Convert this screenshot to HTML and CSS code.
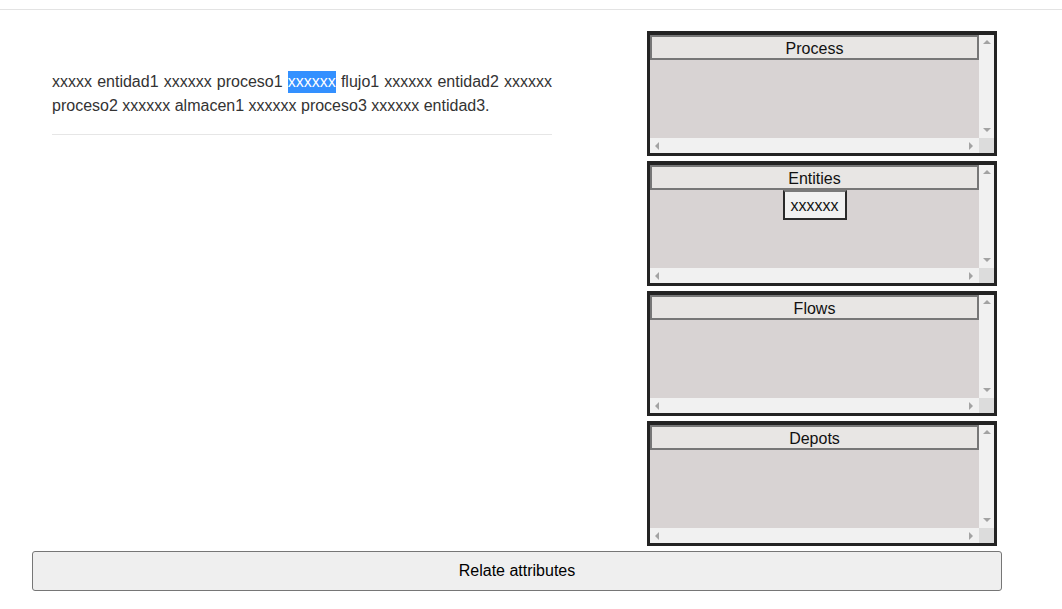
FILE: index.html
```html
<!DOCTYPE html>
<html lang="es">
<head>
<meta charset="utf-8">
<title>Relate attributes</title>
<link rel="stylesheet" href="styles.css">
</head>
<body>
<div class="topbar"></div>
<div class="main">
  <div class="left">
    <p class="sentence">xxxxx entidad1 xxxxxx proceso1 <span class="sel">xxxxxx</span> flujo1 xxxxxx entidad2 xxxxxx proceso2 xxxxxx almacen1 xxxxxx proceso3 xxxxxx entidad3.</p>
    <hr class="rule">
  </div>
  <div class="right">
    <div class="panel">
      <div class="content"><div class="head">Process</div></div>
      <div class="vbar"><span class="arr up"></span><span class="arr down"></span></div>
      <div class="hbar"><span class="arr lt"></span><span class="arr rt"></span></div>
      <div class="corner"></div>
    </div>
    <div class="panel">
      <div class="content"><div class="head">Entities</div><div class="item">xxxxxx</div></div>
      <div class="vbar"><span class="arr up"></span><span class="arr down"></span></div>
      <div class="hbar"><span class="arr lt"></span><span class="arr rt"></span></div>
      <div class="corner"></div>
    </div>
    <div class="panel">
      <div class="content"><div class="head">Flows</div></div>
      <div class="vbar"><span class="arr up"></span><span class="arr down"></span></div>
      <div class="hbar"><span class="arr lt"></span><span class="arr rt"></span></div>
      <div class="corner"></div>
    </div>
    <div class="panel">
      <div class="content"><div class="head">Depots</div></div>
      <div class="vbar"><span class="arr up"></span><span class="arr down"></span></div>
      <div class="hbar"><span class="arr lt"></span><span class="arr rt"></span></div>
      <div class="corner"></div>
    </div>
  </div>
</div>
<button class="relate">Relate attributes</button>
</body>
</html>
```
FILE: styles.css
```css
html, body {
  margin: 0;
  padding: 0;
  background: #fff;
  font-family: "Liberation Sans", Arial, sans-serif;
  font-size: 16px;
  color: #333;
}
.topbar {
  height: 9px;
  border-bottom: 1px solid #e3e3e3;
}
.main {
  display: flex;
  padding-top: 21px;
}
.left {
  width: 500px;
  margin-left: 52px;
}
.sentence {
  margin: 39px 0 0 0;
  line-height: 24px;
  text-align: justify;
}
.sel {
  background: #3390ff;
  color: #fff;
  box-shadow: 0 -2px 0 #3390ff, 0 3px 0 #3390ff;
}
.rule {
  border: 0;
  border-top: 1px solid #e6e6e6;
  margin: 16px 0 0 0;
}
.right {
  margin-left: 95px;
  width: 350px;
  display: flex;
  flex-direction: column;
  gap: 5px;
}
.panel {
  height: 125px;
  box-sizing: border-box;
  border: 3px solid #232323;
  border-top-width: 4px;
  display: grid;
  grid-template-columns: 1fr 15px;
  grid-template-rows: 1fr 15px;
}
.content {
  background: #d8d3d3;
  color: #111;
  overflow: hidden;
}
.vbar {
  background: #f1f1f1;
  display: flex;
  flex-direction: column;
  justify-content: space-between;
  align-items: center;
  padding: 5px 0 6px 0;
}
.hbar {
  background: #f1f1f1;
  display: flex;
  justify-content: space-between;
  align-items: center;
  padding: 0 6px 0 5px;
}
.corner {
  background: #dcdcdc;
}
.arr {
  display: block;
  width: 0;
  height: 0;
}
.up {
  border-left: 4px solid transparent;
  border-right: 4px solid transparent;
  border-bottom: 4px solid #a3a3a3;
}
.down {
  border-left: 4px solid transparent;
  border-right: 4px solid transparent;
  border-top: 4px solid #a3a3a3;
}
.lt {
  border-top: 4px solid transparent;
  border-bottom: 4px solid transparent;
  border-right: 4px solid #a3a3a3;
}
.rt {
  border-top: 4px solid transparent;
  border-bottom: 4px solid transparent;
  border-left: 4px solid #a3a3a3;
}
.head {
  box-sizing: border-box;
  height: 25px;
  border: 2px solid #777;
  background: #e8e6e4;
  text-align: center;
  padding-top: 1px;
  line-height: 22px;
  overflow: hidden;
}
.item {
  width: fit-content;
  margin: 0 auto;
  border: 2px solid #2a2a2a;
  border-top-color: #7a7a7a;
  background: #f1f1f1;
  padding: 1px 6px 0 6px;
  line-height: 25px;
}
.relate {
  display: block;
  margin: 5px 0 0 32px;
  width: 970px;
  height: 40px;
  background: #efefef;
  border: 1px solid #767676;
  border-radius: 3px;
  font-family: "Liberation Sans", Arial, sans-serif;
  font-size: 16px;
  color: #000;
}
```
